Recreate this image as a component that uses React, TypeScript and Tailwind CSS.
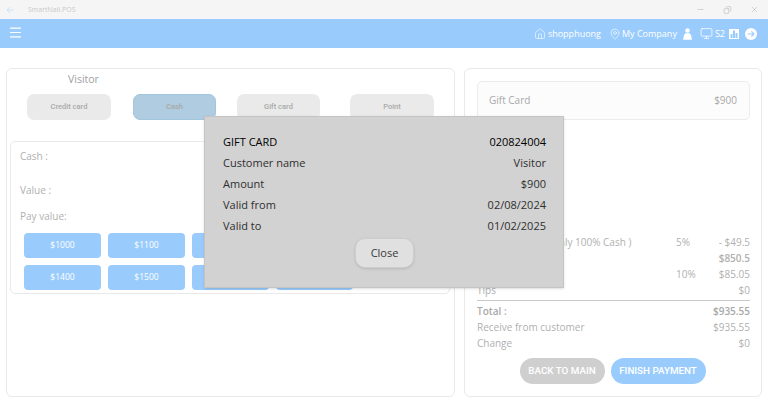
import { ArrowLeft, Minus, X, Copy, Menu, House, MapPin, Monitor } from "lucide-react";

const methods = [
  { label: "Credit card", cls: "ml-[20px] w-[84px] bg-[#eaeaea]" },
  { label: "Cash", cls: "ml-[22px] w-[83px] bg-[#afcce0] border border-[#a3c6df]" },
  { label: "Gift card", cls: "ml-[21px] w-[83px] bg-[#eaeaea]" },
  { label: "Point", cls: "ml-[30px] w-[84px] bg-[#eaeaea]" },
];

const payRows = [
  ["$1000", "$1100", "$1200", "$1300"],
  ["$1400", "$1500", "$1600", "$1700"],
];

const details = [
  ["Customer name", "Visitor"],
  ["Amount", "$900"],
  ["Valid from", "02/08/2024"],
  ["Valid to", "01/02/2025"],
];

const summary = [
  { label: "Discount Card ( Only 100% Cash )", pct: "5%", value: "- $49.5" },
  { label: "Subtotal", pct: "", value: "$850.5", bold: true },
  { label: "Tax", pct: "10%", value: "$85.05" },
  { label: "Tips", pct: "", value: "$0" },
];

const totals = [
  { label: "Total :", value: "$935.55", bold: true },
  { label: "Receive from customer", value: "$935.55" },
  { label: "Change", value: "$0" },
];

export default function App() {
  return (
    <div className="relative flex h-[400px] w-[768px] flex-col overflow-hidden bg-white font-['Open_Sans',sans-serif]">
      <div className="flex h-[19px] items-center bg-[#f5f5f5]">
        <ArrowLeft className="ml-[5px] h-[10px] w-[10px] text-[#b5d8fa]" strokeWidth={1.5} />
        <span className="ml-[13px] pt-[1px] text-[7px] text-[#c9c9c9]">SmartNail.POS</span>
        <div className="ml-auto flex items-center gap-[18px] pr-[9px] text-[#a8a8a8]">
          <Minus className="h-[9px] w-[9px]" strokeWidth={1.2} />
          <Copy className="h-[8px] w-[9px] -scale-x-100" strokeWidth={1.4} />
          <X className="h-[9px] w-[9px]" strokeWidth={1.2} />
        </div>
      </div>

      <div className="flex h-[29px] items-center bg-[#99ccfd] text-[9px] text-white">
        <Menu className="ml-[8px] -mt-[2px] h-[15px] w-[15px]" strokeWidth={1.8} />
        <div className="ml-auto flex items-center pr-[11px]">
          <House className="h-[12px] w-[12px]" strokeWidth={1.2} />
          <span className="ml-[2px]">shopphuong</span>
          <MapPin className="ml-[8px] h-[12px] w-[12px]" strokeWidth={1.2} />
          <span className="ml-[1px]">My Company</span>
          <svg viewBox="0 0 10 13" className="ml-[6px] h-[12px] w-[9px] fill-white">
            <circle cx="5" cy="2.6" r="2.5" />
            <path d="M2.6 5.6h4.8C9 7 9.6 10 9.8 12.8H.2C.4 10 1 7 2.6 5.6z" />
          </svg>
          <Monitor className="ml-[8px] h-[13px] w-[13px]" strokeWidth={1.4} />
          <span className="ml-[2px]">S2</span>
          <svg viewBox="0 0 10 10" className="ml-[4px] h-[10px] w-[10px]">
            <rect width="10" height="10" fill="white" />
            <path d="M1.5 5h2v4h-2zM4 1.5h2V9H4zM6.5 4h2v5h-2z" fill="#99ccfd" />
          </svg>
          <svg viewBox="0 0 12 12" className="ml-[6px] h-[12px] w-[12px]">
            <circle cx="6" cy="6" r="6" fill="white" />
            <path d="M2.8 6h6.2M6.4 3.4L9 6 6.4 8.6" fill="none" stroke="#99ccfd" strokeWidth="1.1" />
          </svg>
        </div>
      </div>

      <div className="flex gap-[9px] pl-[6px] pt-[20px]">
        <section className="h-[329px] w-[449px] rounded-[6px] border border-[#e9e9e9] pt-[3px]">
          <div className="ml-[61px] text-[10.5px] leading-[14px] text-[#a0a0a0]">Visitor</div>
          <div className="mt-[8px] flex">
            {methods.map((m) => (
              <button
                key={m.label}
                className={`h-[26px] rounded-[7px] font-['Roboto',sans-serif] text-[7.5px] font-medium text-[#a9a9a9] ${m.cls}`}
              >
                {m.label}
              </button>
            ))}
          </div>
          <div className="ml-[3px] mt-[21px] h-[153px] w-[440px] rounded-[5px] border border-[#e9e9e9] px-[9px] pt-[7px] text-[10px] text-[#b0b0b0]">
            <div className="leading-[14px]">Cash :</div>
            <div className="mt-[20px] leading-[14px]">Value :</div>
            <div className="mt-[12px] leading-[14px]">Pay value:</div>
            <div className="ml-[4px] mt-[10px] flex flex-col gap-[7px]">
              {payRows.map((row) => (
                <div key={row[0]} className="flex gap-[7px]">
                  {row.map((v) => (
                    <button key={v} className="h-[25px] w-[77px] rounded-[4px] bg-[#99ccfd] text-[8.5px] text-white">
                      {v}
                    </button>
                  ))}
                </div>
              ))}
            </div>
          </div>
        </section>

        <section className="flex h-[329px] w-[298px] flex-col rounded-[6px] border border-[#e9e9e9] pl-[12px] pr-[11px] pt-[12px] text-[10px] text-[#b0b0b0]">
          <div className="flex h-[39px] items-center justify-between rounded-[5px] border border-[#ececec] bg-[#fcfcfc] pl-[11px] pr-[12px] text-[#a8a8a8]">
            <span>Gift Card</span>
            <span>$900</span>
          </div>
          <div className="mt-[114px] flex flex-col">
            {summary.map((r) => (
              <div key={r.label} className={`flex h-[16px] items-center leading-[16px] ${r.bold ? "font-semibold" : ""}`}>
                <span className="flex-1">{r.label}</span>
                <span className="w-[29px]">{r.pct}</span>
                <span className="w-[45px] text-right">{r.value}</span>
              </div>
            ))}
          </div>
          <div className="mt-[2px] border-t border-[#c8c8c8] pt-[2px]">
            {totals.map((r) => (
              <div key={r.label} className={`flex h-[16px] items-center justify-between leading-[16px] ${r.bold ? "font-semibold text-[#a8a8a8]" : ""}`}>
                <span>{r.label}</span>
                <span>{r.value}</span>
              </div>
            ))}
          </div>
          <div className="mt-[7px] flex justify-center gap-[6px] pr-[2px] font-['Roboto',sans-serif] text-[9.8px] font-medium text-white">
            <button className="h-[26px] w-[85px] rounded-full bg-[#cfcfcf]">BACK TO MAIN</button>
            <button className="h-[26px] w-[95px] rounded-full bg-[#99ccfd]">FINISH PAYMENT</button>
          </div>
        </section>
      </div>

      <div className="absolute left-[204px] top-[116px] flex h-[172px] w-[360px] flex-col border border-[#c4c4c4] bg-[#d2d2d2] pl-[18px] pr-[17px] pt-[15px] text-[11px] text-[#2f2f2f] shadow-sm">
        <div className="flex h-[21px] items-center justify-between font-medium text-black">
          <span>GIFT CARD</span>
          <span>020824004</span>
        </div>
        {details.map(([k, v]) => (
          <div key={k} className="flex h-[21px] items-center justify-between">
            <span>{k}</span>
            <span>{v}</span>
          </div>
        ))}
        <button className="mx-auto mt-[1px] h-[30px] w-[59px] rounded-[10px] border border-[#cdcdcd] bg-[#e0e0e0] text-[11px] text-[#3a3a3a] shadow-sm">
          Close
        </button>
      </div>
    </div>
  );
}
